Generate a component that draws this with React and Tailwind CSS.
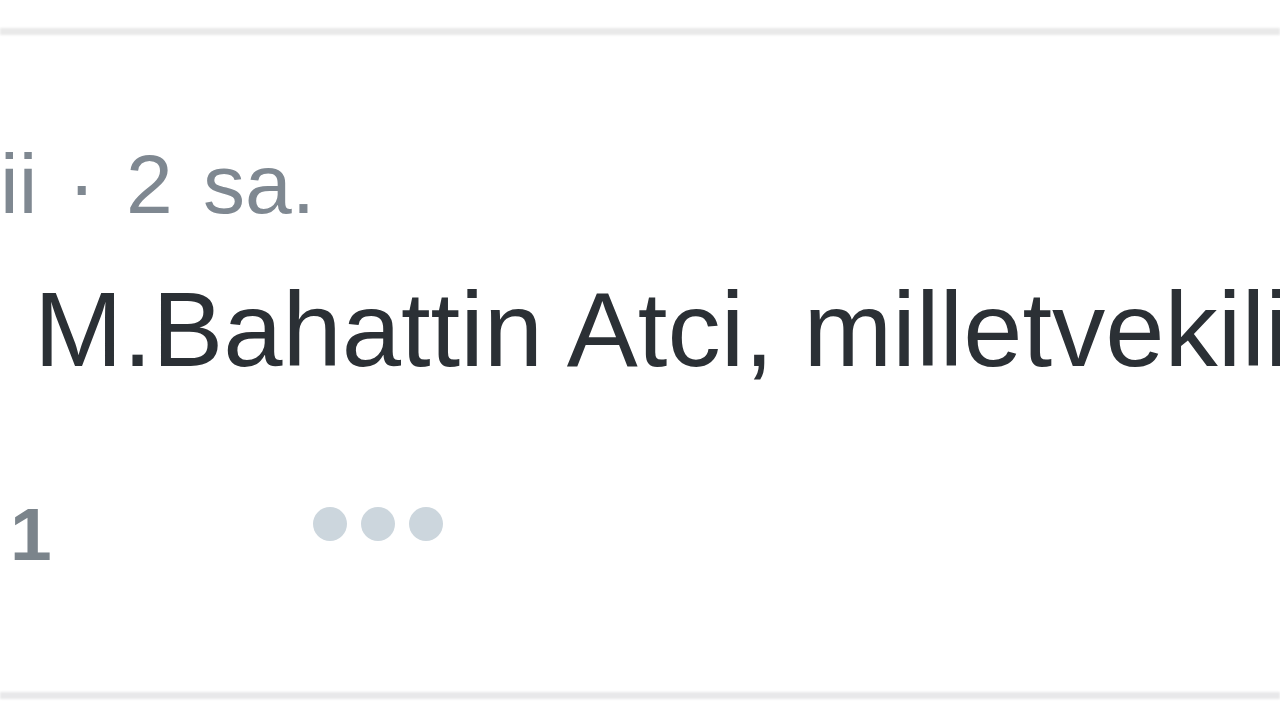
export default function App() {
  return (
    <div className="h-screen w-full overflow-hidden bg-white font-['Liberation_Sans',Arial,sans-serif]">
      {/* top divider */}
      <div className="pt-[28px]">
        <div className="h-[7px] w-full bg-[#e9e9e9] blur-[1px]" />
      </div>

      {/* meta line */}
      <div className="mt-[107px] whitespace-nowrap text-[84px] leading-none text-[#7f8891] [word-spacing:7px]">
        ii · 2 sa.
      </div>

      {/* tweet text */}
      <div className="mt-[51px] whitespace-nowrap pl-[34px] text-[106.5px] leading-none text-[#2b3035]">
        M.Bahattin Atci, milletvekili
      </div>

      {/* actions */}
      <div className="mt-[113px] flex items-start">
        <span className="w-[53px] pl-[10px] text-[75px] font-bold leading-none text-[#7b848b]">1</span>
        <div className="ml-[260px] mt-[10px] flex gap-[14px]">
          <span className="h-[34px] w-[34px] rounded-full bg-[#ccd6dd]" />
          <span className="h-[34px] w-[34px] rounded-full bg-[#ccd6dd]" />
          <span className="h-[34px] w-[34px] rounded-full bg-[#ccd6dd]" />
        </div>
      </div>

      {/* bottom divider */}
      <div className="mt-[120px] h-[7px] w-full bg-[#e8e8ea] blur-[1px]" />
    </div>
  );
}
